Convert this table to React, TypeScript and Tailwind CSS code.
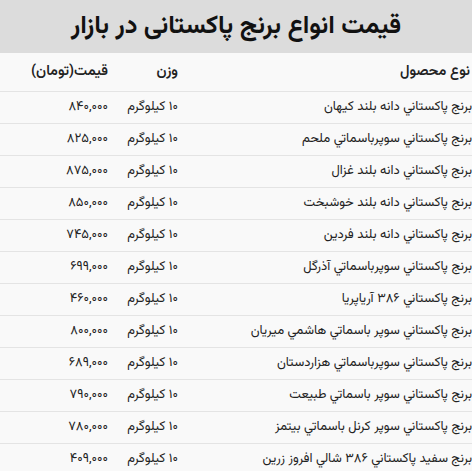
const rows: [string, string][] = [
  ["برنج پاکستاني دانه بلند کيهان", "۸۴۰,۰۰۰"],
  ["برنج پاکستاني سوپرباسماتي ملحم", "۸۲۵,۰۰۰"],
  ["برنج پاکستاني دانه بلند غزال", "۸۷۵,۰۰۰"],
  ["برنج پاکستاني دانه بلند خوشبخت", "۸۵۰,۰۰۰"],
  ["برنج پاکستاني دانه بلند فردين", "۷۴۵,۰۰۰"],
  ["برنج پاکستاني سوپرباسماتي آذرگل", "۶۹۹,۰۰۰"],
  ["برنج پاکستاني ۳۸۶ آرياپريا", "۴۶۰,۰۰۰"],
  ["برنج پاکستاني سوپر باسماتي هاشمي ميريان", "۸۰۰,۰۰۰"],
  ["برنج پاکستاني سوپرباسماتي هزاردستان", "۶۸۹,۰۰۰"],
  ["برنج پاکستاني سوپر باسماتي طبيعت", "۷۹۰,۰۰۰"],
  ["برنج پاکستاني سوپر کرنل باسماتي بيتمز", "۷۸۰,۰۰۰"],
  ["برنج سفيد پاکستاني ۳۸۶ شالي افروز زرين", "۴۰۹,۰۰۰"],
];

export default function App() {
  return (
    <div
      dir="rtl"
      className="w-[472px] h-[471px] overflow-hidden bg-[#f9f9f9] text-[#222]"
      style={{ fontFamily: '"Vazirmatn", "Noto Sans Arabic", "DejaVu Sans", sans-serif' }}
    >
      <div className="h-[53px] bg-[#dcdcdc] flex items-center justify-center pt-[2px]">
        <h1 className="text-[25.5px] font-bold text-[#111] leading-none">قیمت انواع برنج پاکستانی در بازار</h1>
      </div>
      <div className="h-[38px] flex items-center text-[14.5px] font-semibold">
        <div className="flex-1 pr-[2px]">نوع محصول</div>
        <div className="w-[68px]">وزن</div>
        <div className="w-[110px] pr-[2px]">قیمت(تومان)</div>
      </div>
      {rows.map(([name, price]) => (
        <div key={name} className="h-[32px] flex items-center border-t border-[#e4e4e4] text-[13px]">
          <div className="flex-1 whitespace-nowrap">{name}</div>
          <div className="w-[68px] whitespace-nowrap">۱۰ کیلوگرم</div>
          <div className="w-[110px] pr-[2px] whitespace-nowrap">{price}</div>
        </div>
      ))}
    </div>
  );
}
